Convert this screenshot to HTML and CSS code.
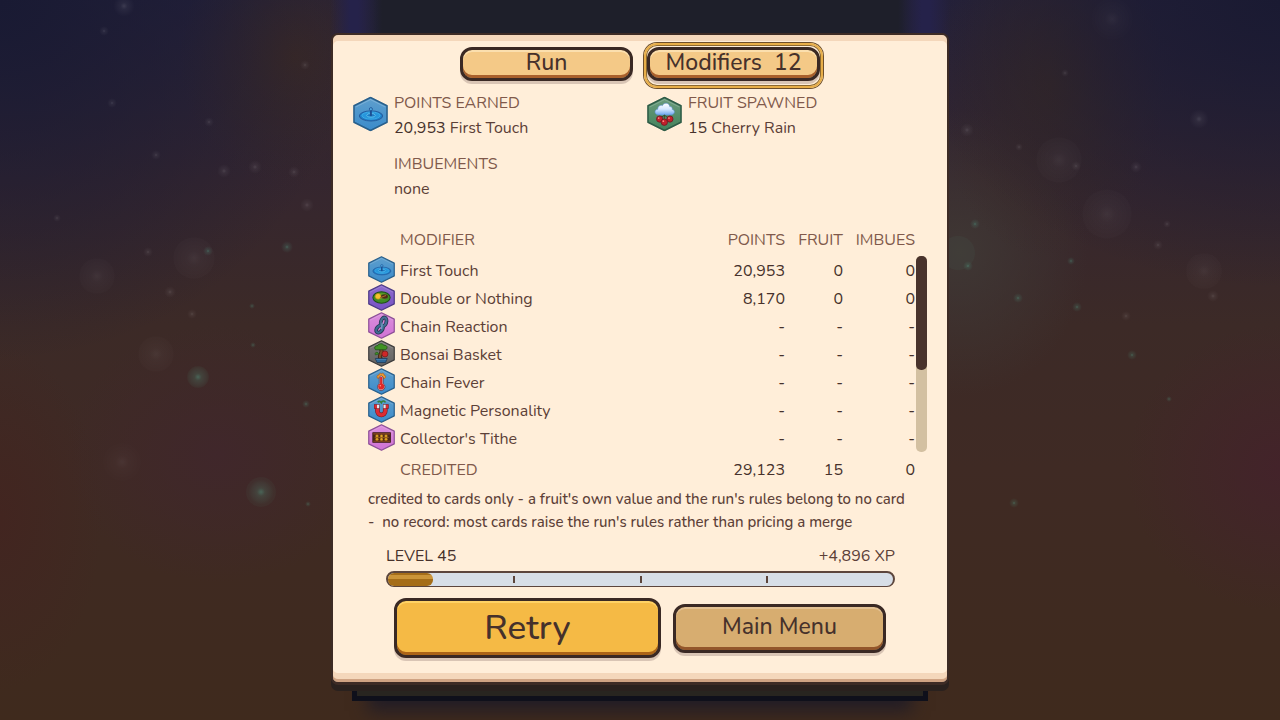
FILE: index.html
```html
<!DOCTYPE html>
<html lang="en">
<head>
    <meta charset="UTF-8">
    <meta name="viewport" content="width=device-width, initial-scale=1.0">
    <title>Run Summary</title>
    <link rel="stylesheet" href="styles.css">
</head>
<body>
    <!-- Icon set -->
    <svg class="sprite" aria-hidden="true">
        <defs>
            <linearGradient id="g-blue" x1="0" y1="0" x2="0" y2="1"><stop offset="0" stop-color="#5f9fcd"/><stop offset="1" stop-color="#3a8bcb"/></linearGradient>
            <linearGradient id="g-green" x1="0" y1="0" x2="0" y2="1"><stop offset="0" stop-color="#6b9c7d"/><stop offset="1" stop-color="#42825b"/></linearGradient>
            <linearGradient id="g-violet" x1="0" y1="0" x2="0" y2="1"><stop offset="0" stop-color="#8f6dce"/><stop offset="1" stop-color="#7751c4"/></linearGradient>
            <linearGradient id="g-pink" x1="0" y1="0" x2="0" y2="1"><stop offset="0" stop-color="#dc8fdd"/><stop offset="1" stop-color="#cf72d4"/></linearGradient>
            <linearGradient id="g-gray" x1="0" y1="0" x2="0" y2="1"><stop offset="0" stop-color="#7d7c7b"/><stop offset="1" stop-color="#626161"/></linearGradient>
            <linearGradient id="g-cloud" x1="0" y1="0" x2="0" y2="1"><stop offset="0" stop-color="#ffffff"/><stop offset="0.5" stop-color="#d5e8ff"/><stop offset="1" stop-color="#6aa5ee"/></linearGradient>
        </defs>
        <symbol id="hex" viewBox="0 0 36 36">
            <path d="M18 1 L35 9.5 V26.5 L18 35 L1 26.5 V9.5 Z" stroke-width="1.6" stroke-linejoin="round"/>
            <path d="M18 3.2 L33.2 10.8 M18 3.2 L2.8 10.8" fill="none" stroke="#fff" stroke-opacity="0.2"/>
        </symbol>
        <symbol id="ripple" viewBox="0 0 36 36">
            <use href="#hex" fill="url(#g-blue)" stroke="#285f8b"/>
            <ellipse cx="18.5" cy="20" rx="12" ry="5.2" fill="#1c7fca" stroke="#245a9c" stroke-width="1"/>
            <ellipse cx="18.5" cy="19.6" rx="9.4" ry="3.7" fill="#2796dc" stroke="#46b3e8" stroke-width="0.8"/>
            <ellipse cx="18.5" cy="19.4" rx="4.4" ry="1.9" fill="#1b79c4" stroke="#6cccf0" stroke-width="0.8"/>
            <path d="M18.4 20 V14" stroke="#1d4f93" stroke-width="2"/>
            <circle cx="18.4" cy="13" r="1.6" fill="#4fa8de" stroke="#1d4f93" stroke-width="0.8"/>
        </symbol>
        <symbol id="cherry-rain" viewBox="0 0 36 36">
            <use href="#hex" fill="url(#g-green)" stroke="#2d5b46"/>
            <path d="M12 19 C7.4 19 7 13.6 11 13.2 C11 9.4 14.6 8.4 15.8 9.4 C17.6 5.6 23 6.4 23.4 10.4 C25.6 10.2 26.4 12.2 25.8 13.2 C29.4 13.8 29 19 24.6 19 Z" fill="url(#g-cloud)" stroke="#5d8fd2" stroke-width="0.6"/>
            <path d="M14 22 L18 19.2 L23 23 M18 19 L17.5 25" fill="none" stroke="#354a2a" stroke-width="1"/>
            <g fill="#c3202c" stroke="#6d1620" stroke-width="0.8">
                <circle cx="13" cy="23.2" r="3.2"/><circle cx="23.6" cy="23.2" r="3.2"/><circle cx="17.8" cy="26.4" r="3.3"/>
            </g>
            <g fill="#ff8b85"><circle cx="12" cy="22.2" r="0.9"/><circle cx="22.6" cy="22.2" r="0.9"/><circle cx="16.8" cy="25.4" r="0.9"/></g>
        </symbol>
        <symbol id="coin-leaf" viewBox="0 0 36 36">
            <use href="#hex" fill="url(#g-violet)" stroke="#4c3a86"/>
            <ellipse cx="18" cy="18" rx="11.5" ry="7.6" fill="#3f8c25" stroke="#1f4f1a" stroke-width="1.4"/>
            <ellipse cx="18" cy="16.4" rx="9" ry="4.4" fill="#5a9c28"/>
            <circle cx="13.4" cy="16.4" r="3.8" fill="#f6c22c" stroke="#b8860f" stroke-width="0.8"/>
            <ellipse cx="22" cy="16.6" rx="4.6" ry="3" fill="#4b2a17"/>
            <path d="M16 18.4 L24 15.4" stroke="#a56b2a" stroke-width="1.4"/>
        </symbol>
        <symbol id="chain" viewBox="0 0 36 36">
            <use href="#hex" fill="url(#g-pink)" stroke="#8c4f97"/>
            <g fill="none" stroke-linecap="round">
                <ellipse cx="20.8" cy="13.2" rx="3.6" ry="6" transform="rotate(16 20.8 13.2)" stroke="#27374f" stroke-width="5"/>
                <ellipse cx="15.4" cy="22.6" rx="3.6" ry="5.6" transform="rotate(40 15.4 22.6)" stroke="#27374f" stroke-width="5"/>
                <ellipse cx="20.8" cy="13.2" rx="3.6" ry="6" transform="rotate(16 20.8 13.2)" stroke="#456f96" stroke-width="2.8"/>
                <ellipse cx="15.4" cy="22.6" rx="3.6" ry="5.6" transform="rotate(40 15.4 22.6)" stroke="#3f6b93" stroke-width="2.8"/>
                <path d="M19 15 L18 22" stroke="#6f9dbf" stroke-width="2"/>
            </g>
        </symbol>
        <symbol id="bonsai" viewBox="0 0 36 36">
            <use href="#hex" fill="url(#g-gray)" stroke="#3d3c3c"/>
            <path d="M18 26 C11 20 22 19 17 11" fill="none" stroke="#3f2616" stroke-width="5.4"/>
            <path d="M18 26 C11 20 22 19 17 11" fill="none" stroke="#80502a" stroke-width="3"/>
            <path d="M10 13 C7 9 11 7 12.4 8 C14 4 20 4.4 21 7 C26 6.4 27 11.8 23 13 Z" fill="#3f9324" stroke="#1f4d17" stroke-width="1"/>
            <path d="M10 20 C8 17 12 14.6 14.6 18.4 Z" fill="#3f9324" stroke="#1f4d17" stroke-width="0.8"/>
            <circle cx="22.6" cy="18.6" r="4" fill="#cf2828" stroke="#701717" stroke-width="0.9"/>
            <path d="M9.8 24.6 H25.6 L23.4 30 H12 Z" fill="#2e6797" stroke="#1c3a58" stroke-width="1"/>
            <path d="M11 26 H24.4" stroke="#4b86b3" stroke-width="1"/>
        </symbol>
        <symbol id="thermometer" viewBox="0 0 36 36">
            <use href="#hex" fill="url(#g-blue)" stroke="#285f8b"/>
            <path d="M12.4 13.6 C11 10 13.6 8.6 14.4 9.6 C15 6.4 18 6.6 18 8 C19.4 5.6 21.6 7.4 21.4 9.6 C24.6 9.6 23.6 13 22 14 Z" fill="#ee9a2f" stroke="#a9591b" stroke-width="0.8"/>
            <path d="M15 12 Q17.6 8.6 20.2 12 V20.8 A5 5 0 1 1 15 20.8 Z" fill="#c9d3dd" stroke="#5c3240" stroke-width="1"/>
            <path d="M17.6 12 V24" stroke="#e02828" stroke-width="3"/>
            <circle cx="17.6" cy="24.6" r="4.1" fill="#e02828"/>
            <circle cx="16.4" cy="23.8" r="1" fill="#ff9a90"/>
        </symbol>
        <symbol id="magnet" viewBox="0 0 36 36">
            <use href="#hex" fill="url(#g-blue)" stroke="#285f8b"/>
            <path d="M13 8.4 C15 5.6 17 8 17.8 9 C19 6 22.4 6 23 8.6" fill="none" stroke="#37803a" stroke-width="2.2"/>
            <path d="M12.6 14 V20 A5.2 5.2 0 0 0 23 20 V14" fill="none" stroke="#7a1a22" stroke-width="6.2"/>
            <path d="M12.6 14 V20 A5.2 5.2 0 0 0 23 20 V14" fill="none" stroke="#dc2c34" stroke-width="4.6"/>
            <path d="M8 14 L15.6 14 M20 14 L27.6 14" stroke="#7a1a22" stroke-width="6"/>
            <path d="M8.6 14 H12 M23.6 14 H27" stroke="#dc2c34" stroke-width="4.6"/>
            <path d="M12 14 H15 M20.6 14 H23.6" stroke="#dfe8ef" stroke-width="4.6"/>
        </symbol>
        <symbol id="abacus" viewBox="0 0 36 36">
            <use href="#hex" fill="url(#g-pink)" stroke="#8c4f97"/>
            <rect x="6.4" y="11.6" width="23.6" height="12.8" fill="#4b2719" stroke="#371a10" stroke-width="1"/>
            <path d="M7 13.2 H29.4 M7 23 H29.4" stroke="#8a4a21" stroke-width="1.6"/>
            <path d="M9 18 H27.6" stroke="#a8691f" stroke-width="1"/>
            <g fill="#e2a523" stroke="#7b4a10" stroke-width="0.5">
                <circle cx="12" cy="16" r="2"/><circle cx="18" cy="16" r="2"/><circle cx="24" cy="16" r="2"/>
                <circle cx="12" cy="20.2" r="2"/><circle cx="18" cy="20.2" r="2"/><circle cx="24" cy="20.2" r="2"/>
            </g>
        </symbol>
    </svg>

    <!-- Night sky behind the panel -->
    <svg class="stars" viewBox="0 0 1280 720" preserveAspectRatio="xMidYMid slice" aria-hidden="true">
        <defs>
            <radialGradient id="glow"><stop offset="0" stop-color="#fff"/><stop offset="0.3" stop-color="#fff" stop-opacity="0.4"/><stop offset="1" stop-color="#fff" stop-opacity="0"/></radialGradient>
            <radialGradient id="glow-teal"><stop offset="0" stop-color="#5fe0bb"/><stop offset="0.3" stop-color="#5fe0bb" stop-opacity="0.4"/><stop offset="1" stop-color="#5fe0bb" stop-opacity="0"/></radialGradient>
        </defs>
        <g fill="url(#glow)" opacity="0.13">
            <circle cx="124" cy="6" r="11"/><circle cx="104" cy="31" r="5"/><circle cx="305" cy="65" r="5"/><circle cx="209" cy="122" r="5"/>
            <circle cx="112" cy="103" r="5"/><circle cx="156" cy="155" r="5"/><circle cx="224" cy="171" r="7"/><circle cx="255" cy="167" r="7"/>
            <circle cx="294" cy="172" r="6"/><circle cx="307" cy="205" r="7"/><circle cx="148" cy="252" r="5"/><circle cx="170" cy="292" r="6"/>
            <circle cx="192" cy="314" r="5"/><circle cx="57" cy="218" r="4"/><circle cx="967" cy="130" r="7"/><circle cx="1065" cy="73" r="4"/>
            <circle cx="1199" cy="119" r="10"/><circle cx="1076" cy="166" r="5"/><circle cx="1136" cy="167" r="6"/><circle cx="1167" cy="224" r="4"/>
            <circle cx="1126" cy="316" r="5"/><circle cx="1213" cy="296" r="6"/><circle cx="1019" cy="147" r="4"/><circle cx="1158" cy="245" r="5"/>
        </g>
        <g fill="url(#glow)" opacity="0.05">
            <circle cx="97" cy="276" r="20"/><circle cx="194" cy="258" r="24"/><circle cx="156" cy="354" r="20"/><circle cx="122" cy="462" r="22"/>
            <circle cx="1059" cy="160" r="26"/><circle cx="1107" cy="214" r="28"/><circle cx="1204" cy="271" r="20"/><circle cx="1112" cy="19" r="24"/>
        </g>
        <g fill="#fff" fill-opacity="0.01">
            <circle cx="97" cy="276" r="18"/><circle cx="194" cy="258" r="21"/><circle cx="156" cy="354" r="18"/>
            <circle cx="1059" cy="160" r="23"/><circle cx="1107" cy="214" r="25"/><circle cx="1204" cy="271" r="18"/>
        </g>
        <g fill="url(#glow-teal)" opacity="0.3">
            <circle cx="198" cy="377" r="11"/><circle cx="261" cy="492" r="13"/><circle cx="208" cy="251" r="5"/><circle cx="287" cy="247" r="6"/>
            <circle cx="252" cy="306" r="3"/><circle cx="253" cy="345" r="3"/><circle cx="306" cy="404" r="4"/><circle cx="308" cy="504" r="3"/>
            <circle cx="975" cy="224" r="5"/><circle cx="968" cy="266" r="5"/><circle cx="1018" cy="298" r="5"/><circle cx="1071" cy="261" r="4"/>
            <circle cx="1077" cy="307" r="5"/><circle cx="1132" cy="355" r="5"/><circle cx="1169" cy="399" r="3"/><circle cx="1014" cy="503" r="5"/>
        </g>
        <g fill="#5fe0bb" fill-opacity="0.04">
            <circle cx="198" cy="377" r="11"/><circle cx="261" cy="492" r="15"/><circle cx="958" cy="253" r="17"/>
        </g>
    </svg>
    <div class="well" aria-hidden="true"></div>

    <main class="panel">
        <nav class="tabs">
            <button type="button" class="btn tab">Run</button>
            <button type="button" class="btn tab selected">Modifiers&nbsp; 12</button>
        </nav>

        <section class="summary">
            <div class="stat">
                <svg class="icon-large"><use href="#ripple"/></svg>
                <div>
                    <h2>POINTS EARNED</h2>
                    <p><span class="num">20,953</span> First Touch</p>
                </div>
            </div>
            <div class="stat">
                <svg class="icon-large"><use href="#cherry-rain"/></svg>
                <div>
                    <h2>FRUIT SPAWNED</h2>
                    <p><span class="num">15</span> Cherry Rain</p>
                </div>
            </div>
            <div class="stat no-icon">
                <div>
                    <h2>IMBUEMENTS</h2>
                    <p>none</p>
                </div>
            </div>
        </section>

        <section class="modifiers">
            <table>
                <thead>
                    <tr><th class="name">MODIFIER</th><th class="points">POINTS</th><th class="fruit">FRUIT</th><th class="imbues">IMBUES</th></tr>
                </thead>
                <tbody>
                    <tr><td class="name"><svg class="icon"><use href="#ripple"/></svg>First Touch</td><td>20,953</td><td>0</td><td>0</td></tr>
                    <tr><td class="name"><svg class="icon"><use href="#coin-leaf"/></svg>Double or Nothing</td><td>8,170</td><td>0</td><td>0</td></tr>
                    <tr><td class="name"><svg class="icon"><use href="#chain"/></svg>Chain Reaction</td><td>-</td><td>-</td><td>-</td></tr>
                    <tr><td class="name"><svg class="icon"><use href="#bonsai"/></svg>Bonsai Basket</td><td>-</td><td>-</td><td>-</td></tr>
                    <tr><td class="name"><svg class="icon"><use href="#thermometer"/></svg>Chain Fever</td><td>-</td><td>-</td><td>-</td></tr>
                    <tr><td class="name"><svg class="icon"><use href="#magnet"/></svg>Magnetic Personality</td><td>-</td><td>-</td><td>-</td></tr>
                    <tr><td class="name"><svg class="icon"><use href="#abacus"/></svg>Collector's Tithe</td><td>-</td><td>-</td><td>-</td></tr>
                </tbody>
                <tfoot>
                    <tr><th class="name">CREDITED</th><td>29,123</td><td>15</td><td>0</td></tr>
                </tfoot>
            </table>
            <div class="scrollbar"><div class="thumb"></div></div>
        </section>

        <div class="notes">
            <p>credited to cards only - a fruit's own value and the run's rules belong to no card</p>
            <p>-&nbsp; no record: most cards raise the run's rules rather than pricing a merge</p>
        </div>

        <section class="level">
            <div class="level-text">
                <span class="num">LEVEL 45</span>
                <span>+4,896 XP</span>
            </div>
            <div class="bar">
                <div class="fill" style="width: 9%"></div>
                <div class="ticks"><i></i><i></i><i></i></div>
            </div>
        </section>

        <div class="actions">
            <button type="button" class="btn retry">Retry</button>
            <button type="button" class="btn menu">Main Menu</button>
        </div>
    </main>
</body>
</html>
```
FILE: styles.css
```css
* {
    box-sizing: border-box;
}
body {
    margin: 0;
    padding: 33px 12px;
    min-height: 100vh;
    font-family: Nunito, Lato, sans-serif;
    font-size: 16px;
    line-height: 25px;
    color: #5c4037;
    overflow: hidden;
    background:
        radial-gradient(ellipse 30% 40% at 100% 0, #1a1a32, transparent),
        radial-gradient(ellipse 28% 50% at 0 0, #191a33, transparent),
        radial-gradient(ellipse 12% 20% at 100% 65%, #43232a, transparent),
        radial-gradient(ellipse 9% 18% at 23% 8%, #3a2926, transparent),
        radial-gradient(ellipse 9% 24% at 82% 12%, #382926, transparent),
        radial-gradient(ellipse 12% 18% at 17% 63%, #40272b, transparent),
        radial-gradient(ellipse 10% 20% at 75% 35%, #3f3734, transparent),
        radial-gradient(ellipse 8% 24% at 0 72%, #422520, transparent),
        linear-gradient(#25213a, #35262f 25%, #3c2a27 45%, #3f2a24 65%, #3f2a1d);
}
.sprite {
    position: absolute;
    width: 0;
    height: 0;
}
.stars {
    position: absolute;
    top: 0;
    left: 0;
    width: 100%;
    height: 100%;
}

/* play field that shows above and below the panel */
.well {
    position: absolute;
    top: 35px;
    bottom: 19px;
    left: 50%;
    width: 576px;
    margin-left: -288px;
    background: #282520;
    border: 5px solid #0f101b;
    border-top: 0;
    box-shadow: 0 26px 16px -16px #221d26;
}
.well::before {
    content: "";
    position: absolute;
    top: -35px;
    left: -27px;
    right: -27px;
    height: 35px;
    background:
        linear-gradient(90deg, transparent, #25224a 20px, #25224a 28px, transparent 52px, transparent calc(100% - 52px), #25224a calc(100% - 28px), #25224a calc(100% - 20px), transparent),
        linear-gradient(90deg, transparent 20px, #1e1f2a 48px, #1e1f2a calc(100% - 48px), transparent calc(100% - 20px));
}

.panel {
    position: relative;
    max-width: 618px;
    margin: 0 auto;
    padding: 12px 20px 24px;
    background: #ffeed9;
    border: 2px solid #3d2b25;
    border-bottom-width: 3px;
    border-radius: 7px;
    box-shadow: inset 0 -3px #cfa383, inset 0 -9px #f4d7bb, inset 0 6px #f4d7bb, 0 6px #2a211e;
}

.btn {
    font-family: inherit;
    font-size: 23px;
    font-weight: 500;
    line-height: 24px;
    color: #46312b;
    border: 3px solid #3a2924;
    border-radius: 12px;
    cursor: pointer;
}
.tabs {
    display: flex;
    justify-content: center;
    gap: 14px;
}
.tab {
    position: relative;
    width: 173px;
    height: 34px;
    padding: 0 0 3px;
    background: #f4c987;
    box-shadow: inset 0 2px #fbdfae, inset 0 -3px #a9602c, 0 3px #d9c5b5;
}
.selected::after {
    content: "";
    position: absolute;
    inset: -7px -6px -10px;
    border: 2px solid #e8ae48;
    border-radius: 13px;
    box-shadow: 0 0 0 1px #6e4f2b, inset 0 0 0 1px #8c682f;
}

.summary {
    display: grid;
    grid-template-columns: 1fr 1fr;
    gap: 11px 14px;
    margin-top: 10px;
}
.stat {
    display: flex;
    gap: 6px;
}
.stat.no-icon {
    padding-left: 41px;
}
.icon-large {
    width: 35px;
    height: 36px;
    margin-top: 5px;
}
h2, p {
    margin: 0;
    font-size: 16px;
    font-weight: normal;
}
h2, th {
    color: #80594b;
    font-weight: normal;
}
.num {
    color: #46312b;
}

.modifiers {
    display: flex;
    margin-top: 25px;
    padding-left: 15px;
}
table {
    flex: 1;
    border-collapse: collapse;
    table-layout: fixed;
}
th, td {
    height: 28px;
    padding: 2px 1px 0 0;
    text-align: right;
    line-height: 26px;
}
thead th {
    height: 29px;
    padding-top: 0;
    vertical-align: top;
}
tfoot th, tfoot td {
    height: 32px;
    padding-top: 3px;
}
td {
    color: #46312b;
}
.name {
    text-align: left;
}
th.name {
    padding-left: 32px;
}
td.name {
    display: flex;
    align-items: center;
    gap: 5px;
    color: #5c4037;
}
.points {
    width: 80px;
}
.fruit {
    width: 58px;
}
.imbues {
    width: 72px;
}
.icon {
    width: 27px;
    height: 27px;
    margin-top: -3px;
}
.scrollbar {
    width: 11px;
    margin: 29px 0 32px;
    background: #d3c0a1;
    border-radius: 5px;
}
.thumb {
    height: 58%;
    background: #49332c;
    border-radius: 5px;
}

.notes {
    padding-left: 15px;
    margin-top: 4px;
}
.notes p {
    font-size: 15px;
    font-weight: 500;
    line-height: 23px;
    white-space: nowrap;
}

.level {
    margin: 10px 32px 0 33px;
}
.level-text {
    display: flex;
    justify-content: space-between;
}
.bar {
    position: relative;
    height: 16px;
    margin-top: 2px;
    background: #d7dee7;
    border: 2px solid #5c453c;
    border-bottom-width: 1px;
    border-radius: 8px;
}
.fill {
    height: 13px;
    background: linear-gradient(#a56d18 2px, #cb9438 2px, #cb9438 6px, #a56d18 6px);
    border-radius: 6px;
}
.ticks {
    position: absolute;
    inset: 3px 0;
    display: flex;
    justify-content: space-evenly;
}
.ticks i {
    width: 2px;
    background: #5c453c;
}

.actions {
    display: flex;
    align-items: center;
    justify-content: center;
    gap: 12px;
    margin-top: 11px;
}
.retry {
    width: 267px;
    height: 60px;
    padding: 0;
    font-size: 35px;
    line-height: 44px;
    background: #f5ba45;
    box-shadow: inset 0 2px #ffd265, inset 0 -3px #ac6417, 0 3px #d9c5b5;
}
.menu {
    width: 213px;
    height: 49px;
    padding: 0 0 3px;
    background: #d7ad70;
    box-shadow: inset 0 2px #e3c193, inset 0 -3px #93562a, 0 3px #d9c5b5;
}
```
